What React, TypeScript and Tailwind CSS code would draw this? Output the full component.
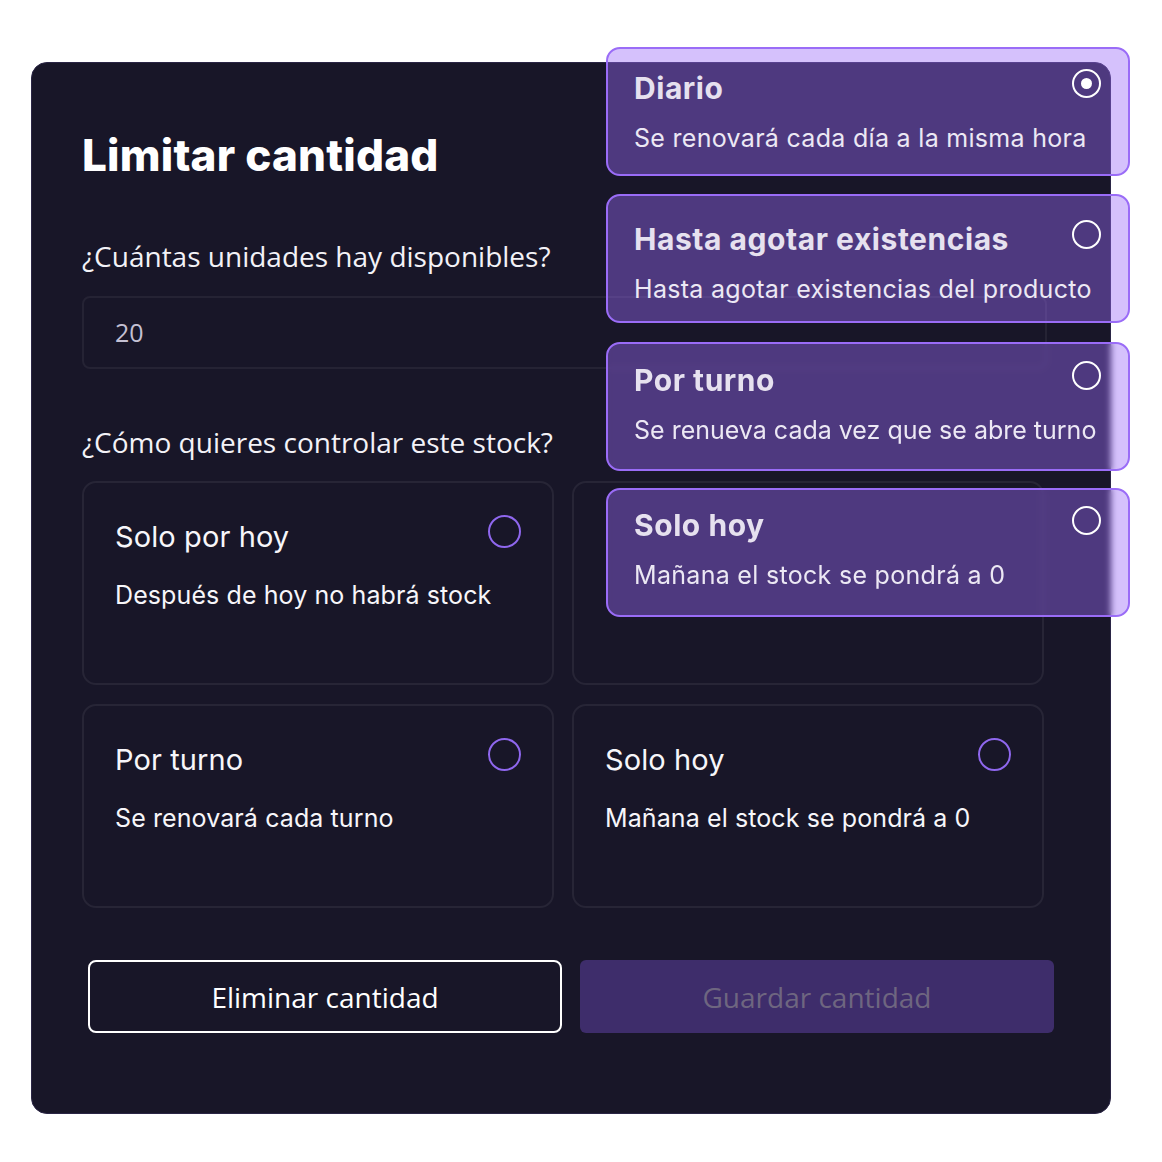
import React from "react";

const inter = "font-['Inter','Noto_Sans',sans-serif]";
const label = "font-['Open_Sans','Noto_Sans',sans-serif]";

function GridCard({ title, desc }: { title?: string; desc?: string }) {
  return (
    <div className="relative h-[204px] rounded-[14px] border-2 border-[#272536] px-[31px]">
      {title && (
        <>
          <div className="flex items-start justify-between pt-[31px]">
            <div className={`${inter} pt-[5px] text-[29px] leading-[36px] tracking-[0.1px] text-[#f7f6fa]`}>
              {title}
            </div>
            <div className="mt-[1px] h-[33px] w-[33px] rounded-full border-2 border-[#8f67ee]" />
          </div>
          <div className={`${inter} mt-[25px] text-[25px] leading-[30px] tracking-[0.1px] text-[#f7f6fa]`}>
            {desc}
          </div>
        </>
      )}
    </div>
  );
}

function FloatCard({
  title,
  desc,
  selected,
  pt,
  blur,
  tight,
}: {
  title: string;
  desc: string;
  selected?: boolean;
  pt: string;
  blur?: boolean;
  tight?: boolean;
}) {
  return (
    <div
      className={`h-[129px] rounded-[14px] border-2 border-[#9a6cf7] bg-[rgba(154,108,247,0.42)] pl-[26px] pr-[27px] ${pt} ${
        blur ? "backdrop-blur-[3px]" : ""
      }`}
    >
      <div className="flex items-start justify-between">
        <div className={`${inter} text-[30px] font-bold leading-[36px] tracking-[0.55px] text-[#e6e1ef]`}>
          {title}
        </div>
        <div className="-mt-[1px] flex h-[29px] w-[29px] items-center justify-center rounded-full border-2 border-white">
          {selected && <div className="h-[11px] w-[11px] rounded-full bg-white" />}
        </div>
      </div>
      <div
        className={`${inter} mt-[17px] whitespace-nowrap text-[25px] leading-[30px] ${
          tight ? "tracking-[0px]" : "tracking-[0.3px]"
        } text-[#ece8f4]`}
      >
        {desc}
      </div>
    </div>
  );
}

export default function App() {
  return (
    <div className="relative min-h-[1162px] w-[1162px] bg-white">
      <div className="pl-[31px] pt-[62px]">
        <div className="h-[1052px] w-[1080px] rounded-[16px] border border-[#2a2545] bg-[#181628] pl-[50px] pr-[63px] pt-[68px]">
          <h1 className={`${inter} text-[44px] font-extrabold leading-[48px] tracking-[0.2px] text-white`}>
            Limitar cantidad
          </h1>
          <div className={`${label} mt-[61px] text-[28px] leading-[32px] text-[#f3f2f7]`}>
            ¿Cuántas unidades hay disponibles?
          </div>
          <div className="mt-[24px] flex h-[73px] items-center rounded-[8px] border-2 border-[#252334] pl-[31px]">
            <span className={`${label} text-[25px] text-[#c4c0d3]`}>20</span>
          </div>
          <div className={`${label} mt-[57px] text-[28px] leading-[32px] text-[#f3f2f7]`}>
            ¿Cómo quieres controlar este stock?
          </div>
          <div className="mt-[23px] grid w-[962px] grid-cols-2 gap-x-[18px] gap-y-[19px]">
            <GridCard title="Solo por hoy" desc="Después de hoy no habrá stock" />
            <GridCard />
            <GridCard title="Por turno" desc="Se renovará cada turno" />
            <GridCard title="Solo hoy" desc="Mañana el stock se pondrá a 0" />
          </div>
          <div className="ml-[6px] mt-[52px] grid w-[966px] grid-cols-2 gap-x-[18px]">
            <button
              className={`${label} h-[73px] rounded-[8px] border-2 border-white text-[28px] text-white`}
            >
              Eliminar cantidad
            </button>
            <button
              className={`${label} h-[73px] rounded-[6px] bg-[#3e2d6b] text-[28px] text-[#6e6680]`}
            >
              Guardar cantidad
            </button>
          </div>
        </div>
      </div>

      <div className="absolute left-[606px] top-[47px] flex w-[524px] flex-col gap-[17px]">
        <FloatCard title="Diario" desc="Se renovará cada día a la misma hora" selected pt="pt-[21px]" />
        <div className="mt-[1px]">
          <FloatCard
            title="Hasta agotar existencias"
            desc="Hasta agotar existencias del producto"
            pt="pt-[25px]"
          />
        </div>
        <div className="mt-[2px]">
          <FloatCard
            title="Por turno"
            desc="Se renueva cada vez que se abre turno"
            pt="pt-[18px]"
            blur
            tight
          />
        </div>
        <FloatCard title="Solo hoy" desc="Mañana el stock se pondrá a 0" pt="pt-[17px]" blur />
      </div>
    </div>
  );
}
